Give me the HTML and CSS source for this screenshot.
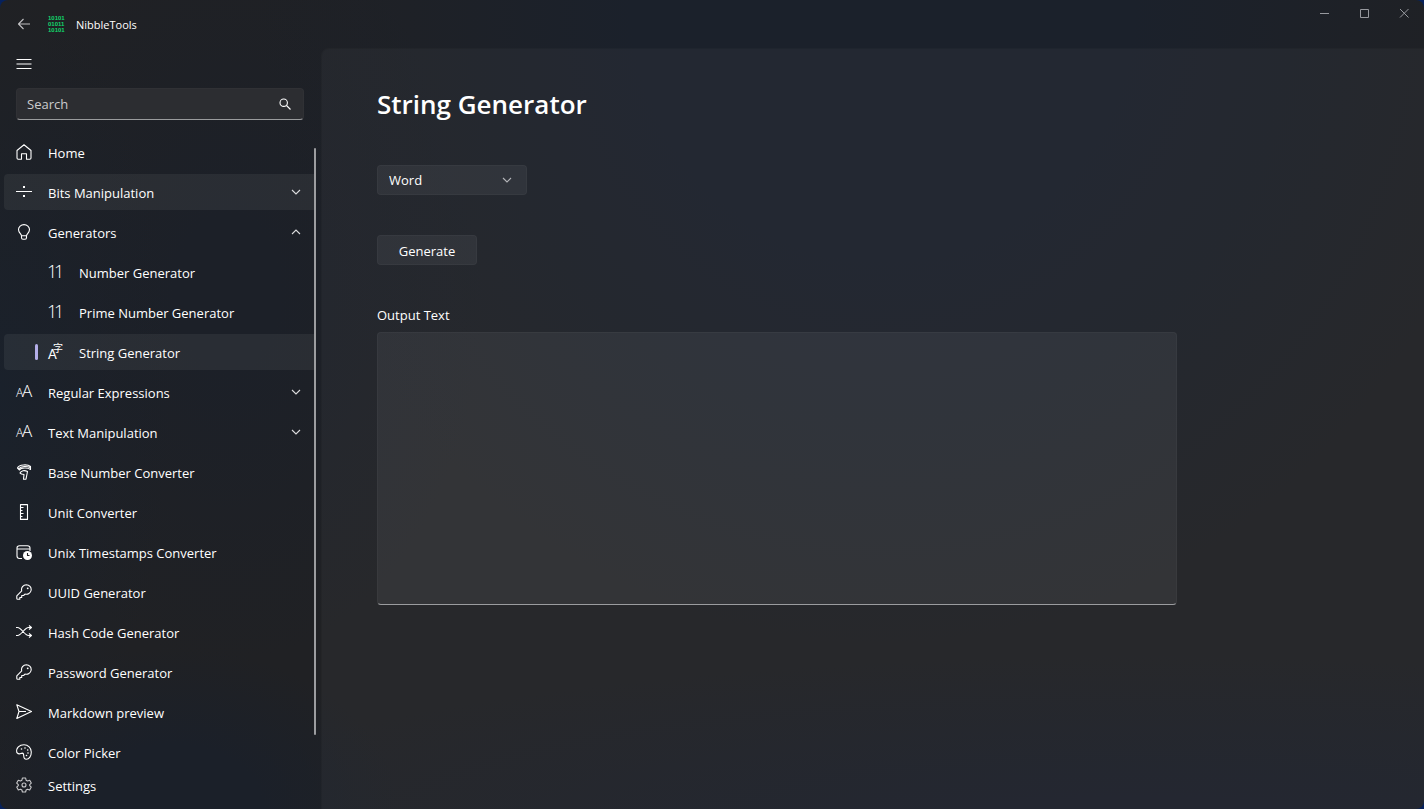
FILE: index.html
```html
<!DOCTYPE html>
<html lang="en">
<head>
<meta charset="utf-8">
<title>NibbleTools</title>
<link rel="stylesheet" href="styles.css">
</head>
<body>
<svg class="defs" aria-hidden="true">
  <symbol id="down" viewBox="0 0 10 10"><path d="M1 3l4 4 4-4"/></symbol>
  <symbol id="key" viewBox="0 0 16 16"><path d="M10.4.7a4.9 4.9 0 0 0-4.7 6.2L.8 11.800V14.500q0 .8.8.8H3.800V13.500H5.700V11.500H7.600L9 10.100A4.800 4.800 0 1 0 10.400.7z"/><circle class="solid" cx="11.700" cy="4.300" r=".9"/></symbol>
</svg>
<div class="window">
  <aside class="sidebar">
    <header class="brand">
      <button class="plain" type="button" aria-label="Back"><svg class="icon muted" viewBox="0 0 16 16"><path d="M14 8H2.500M7.500 3L2.500 8l5 5"/></svg></button>
      <svg class="icon logo" viewBox="0 0 16 16" aria-hidden="true"><text x="0" y="4">10101</text><text x="0" y="10">01011</text><text x="0" y="16">10101</text></svg>
      <span class="app-name">NibbleTools</span>
    </header>
    <button class="plain menu" type="button" aria-label="Menu"><svg class="icon" viewBox="0 0 16 16"><path d="M.5 3.500h15M.5 8h15M.5 12.500h15"/></svg></button>
    <form class="search">
      <input type="search" placeholder="Search" aria-label="Search">
      <button class="plain" type="button" aria-label="Find"><svg class="icon small" viewBox="0 0 12 12"><circle cx="4.700" cy="4.700" r="3.700"/><path d="M7.500 7.500l4 4"/></svg></button>
    </form>
    <nav class="nav">
      <div class="items">
        <a class="item" href="#"><svg class="icon" viewBox="0 0 16 16"><path d="M1 6.500L8 .8l7 5.700V14q0 1.200-1.200 1.200H10.500V9.800H5.500v5.400H2.200Q1 15.200 1 14z"/></svg><span>Home</span></a>
        <button class="item hover" type="button"><svg class="icon" viewBox="0 0 16 16"><path d="M0 7.500h16"/><path class="solid" d="M7 2h2v2H7zM7 11h2v2H7z"/></svg><span>Bits Manipulation</span><svg class="chevron"><use href="#down"/></svg></button>
        <button class="item" type="button"><svg class="icon" viewBox="0 0 16 16"><path d="M5.500 11.800C5.300 9.500 2.500 8.800 2.500 5.600a5.500 5 0 0 1 11 0c0 3.200-2.800 3.900-3 6.200zM5.500 11.800v2q0 1.500 1.500 1.500h2q1.500 0 1.500-1.500v-2"/></svg><span>Generators</span><svg class="chevron up"><use href="#down"/></svg></button>
        <a class="item child" href="#"><svg class="icon" viewBox="0 0 16 16"><text class="thin" x="-1 6" y="14" font-size="18">11</text></svg><span>Number Generator</span></a>
        <a class="item child" href="#"><svg class="icon" viewBox="0 0 16 16"><text class="thin" x="-1 6" y="14" font-size="18">11</text></svg><span>Prime Number Generator</span></a>
        <a class="item child selected" href="#" aria-current="page"><svg class="icon" viewBox="0 0 16 16"><text class="latin" x="0" y="15" font-size="13">A</text><text class="han" x="5" y="8" font-size="10">字</text></svg><span>String Generator</span></a>
        <button class="item" type="button"><svg class="icon" viewBox="0 0 16 16"><text class="thin" x="0" y="13" font-size="12">A</text><text class="thin" x="6" y="13" font-size="17">A</text></svg><span>Regular Expressions</span><svg class="chevron"><use href="#down"/></svg></button>
        <button class="item" type="button"><svg class="icon" viewBox="0 0 16 16"><text class="thin" x="0" y="13" font-size="12">A</text><text class="thin" x="6" y="13" font-size="17">A</text></svg><span>Text Manipulation</span><svg class="chevron"><use href="#down"/></svg></button>
        <a class="item" href="#"><svg class="icon" viewBox="0 0 16 16"><path d="M1.500 4C3 .2 12 .2 14.500 2.500v3C12 3.500 5 3.500 3.500 6zM2.500 5C5 1.600 11.500 2.200 14 3.500M4 9C5 6.500 8.500 6 11.500 7.500L10 15.200H7.500L8 10.500 5.500 10z"/></svg><span>Base Number Converter</span></a>
        <a class="item" href="#"><svg class="icon" viewBox="0 0 16 16"><path d="M4.500.6h7v14.800h-7zM4.500 3.500h3M4.500 6.500h2M4.500 9.500h3M4.500 12.500h2"/></svg><span>Unit Converter</span></a>
        <a class="item" href="#"><svg class="icon" viewBox="0 0 16 16"><path d="M6 14.500H3.500Q1 14.500 1 12V4Q1 1.700 3.500 1.700h8Q14 1.700 14 4v3M1 5h13"/><circle class="solid" cx="11.500" cy="11.500" r="4.500"/><path class="cut" d="M11.500 9V11.500h2"/></svg><span>Unix Timestamps Converter</span></a>
        <a class="item" href="#"><svg class="icon"><use href="#key"/></svg><span>UUID Generator</span></a>
        <a class="item" href="#"><svg class="icon" viewBox="0 0 16 16"><path d="M0 3.500h1.500c4 0 7 8 11 8H15M0 11.500h1.500c4 0 7-8 11-8H15M13 1.500l2.500 2L13 5.500M13 9.500l2.500 2L13 13.500"/></svg><span>Hash Code Generator</span></a>
        <a class="item" href="#"><svg class="icon"><use href="#key"/></svg><span>Password Generator</span></a>
        <a class="item" href="#"><svg class="icon" viewBox="0 0 16 16"><path d="M.8.8L15.500 7.500.8 14.500 3 7.500zM3 7.500h7"/></svg><span>Markdown preview</span></a>
        <a class="item" href="#"><svg class="icon" viewBox="0 0 16 16"><path d="M.8 8.500C-.2 4 3.500.7 8 .7A7.300 7.300 0 0 1 15.300 8c0 4-2 7.300-5 7.300-4.500 0-1-6-4-6.200-2 0-2.500 2.500-5.500-.6z"/><g class="solid"><circle cx="5.500" cy="5" r=".8"/><circle cx="9" cy="4" r=".8"/><circle cx="11.700" cy="6" r=".8"/><circle cx="12" cy="9" r=".8"/><circle cx="10.500" cy="11.500" r=".8"/></g></svg><span>Color Picker</span></a>
      </div>
      <div class="rail"><div class="thumb"></div></div>
    </nav>
    <a class="item settings" href="#"><svg class="icon" viewBox="0 0 16 16"><path d="M6.400 1h3.200l.5 2.200 1.400.8 2.200-.7 1.600 2.800L13.700 7.600v1l1.600 1.500-1.600 2.800-2.200-.7-1.400.8L9.600 15H6.400l-.5-2-1.400-.8-2.200.7L.7 10.100l1.600-1.500v-1L.7 6.100l1.600-2.800 2.200.7 1.400-.8z"/><circle cx="8" cy="8" r="2"/></svg><span>Settings</span></a>
  </aside>
  <div class="body">
    <header class="caption">
      <button class="plain" type="button" aria-label="Minimize"><svg class="glyph" viewBox="0 0 10 10"><path d="M1 5.500h9"/></svg></button>
      <button class="plain" type="button" aria-label="Maximize"><svg class="glyph" viewBox="0 0 10 10"><path d="M1.500 1.500h8v8h-8z"/></svg></button>
      <button class="plain" type="button" aria-label="Close"><svg class="glyph" viewBox="0 0 10 10"><path d="M1 1l8.500 8.500M9.500 1L1 9.500"/></svg></button>
    </header>
    <main class="page">
      <h1>String Generator</h1>
      <div class="picker">
        <select aria-label="Kind of text"><option>Word</option></select>
        <svg class="chevron"><use href="#down"/></svg>
      </div>
      <button class="generate" type="button">Generate</button>
      <div class="field">
        <label for="output">Output Text</label>
        <textarea id="output"></textarea>
      </div>
    </main>
  </div>
</div>
</body>
</html>
```
FILE: styles.css
```css
* { box-sizing: border-box; }

body {
  margin: 0;
  background: #06215c;
  color: #fff;
  font: 13px/20px "Open Sans", "Noto Sans", sans-serif;
}

button, input, select, textarea { font: inherit; color: inherit; }

.defs { position: absolute; width: 0; height: 0; }

.window {
  display: grid;
  grid-template-columns: 321px 1fr;
  height: 100vh;
  overflow: hidden;
  border-radius: 8px;
  background:
    radial-gradient(ellipse 44% 80% at 62% 0%, #1b212b 40%, transparent 100%),
    radial-gradient(ellipse 12% 50% at 0% 48%, #1a212b 0%, transparent 100%),
    radial-gradient(ellipse 18% 46% at 16% 36%, #1c2028 20%, transparent 100%),
    radial-gradient(ellipse 16% 20% at 12% 100%, #1b2029 40%, transparent 100%),
    radial-gradient(ellipse 70% 22% at 80% 103%, #1c202a 20%, transparent 100%),
    #202124;
}

.sidebar { display: flex; flex-direction: column; min-height: 0; }

.brand { display: flex; align-items: center; gap: 12px; height: 48px; padding: 0 16px; }
.brand .logo { margin-left: 4px; }
.app-name { padding-top: 1px; font-size: 11px; line-height: 16px; }

.plain {
  display: flex;
  align-items: center;
  justify-content: center;
  padding: 0;
  border: 0;
  background: none;
}

.menu { width: 48px; height: 32px; }

.icon {
  flex: none;
  width: 16px;
  height: 16px;
  overflow: visible;
  fill: none;
  stroke: #fff;
  stroke-width: 1.1;
  stroke-linejoin: round;
}
.icon.small { width: 12px; height: 12px; }
.muted { stroke: #c0c0c2; }
.solid { fill: #fff; stroke: none; }
.cut { stroke: #202124; }
.icon text { fill: #fff; stroke: none; }
.latin { font-family: Lato, sans-serif; }
.thin { font-family: "Open Sans", sans-serif; font-weight: 300; }
.han { font-family: "Noto Sans CJK SC", sans-serif; }
.icon.logo text {
  fill: #12d86c;
  font-family: "Liberation Sans", sans-serif;
  font-size: 6px;
  font-weight: 700;
}

.search {
  display: flex;
  flex: none;
  height: 32px;
  margin: 8px 17px 12px 16px;
  border: 1px solid #303135;
  border-bottom-color: #9a9b9d;
  border-radius: 4px;
  background: #2c2d31;
}
.search input {
  flex: 1;
  min-width: 0;
  padding: 0 10px;
  border: 0;
  outline: 0;
  background: none;
}
.search input::placeholder { color: #cbcbcd; opacity: 1; }
.search .plain { width: 36px; }

.nav { display: flex; flex: 1; min-height: 0; overflow: hidden; }
.items { flex: 1; min-width: 0; }
.rail { flex: none; width: 7px; padding: 16px 0 32px; }
.thumb { width: 2px; height: 100%; border-radius: 1px; background: #9c9da0; }

.item {
  position: relative;
  display: flex;
  align-items: center;
  gap: 16px;
  width: calc(100% - 4px);
  height: 36px;
  margin: 2px 0 4px 4px;
  padding: 0 13px 0 12px;
  border: 0;
  border-radius: 4px 0 0 4px;
  background: none;
  color: #fff;
  text-align: left;
  text-decoration: none;
}
.item span { flex: 1; padding-top: 2px; white-space: nowrap; }
.child { gap: 15px; padding-left: 44px; }
.hover, .selected { background: rgba(255, 255, 255, 0.06); }
.selected::before {
  content: "";
  position: absolute;
  left: 31px;
  top: 10px;
  width: 3px;
  height: 16px;
  border-radius: 2px;
  background: #b4aee8;
}
.settings { flex: none; width: auto; margin: 0 7px 6px 4px; }
.settings .icon { stroke: #c8c8ca; }

.chevron { flex: none; width: 10px; height: 10px; fill: none; stroke: #dcdcde; stroke-width: 1.1; }
.up { transform: rotate(180deg); }

.body { display: flex; flex-direction: column; min-width: 0; }
.caption { display: flex; flex: none; justify-content: flex-end; height: 48px; }
.caption .plain { width: 40px; height: 26px; }
.glyph { width: 10px; height: 10px; fill: none; stroke: #97999e; stroke-width: 1; }

.page {
  flex: 1;
  min-height: 0;
  padding: 36px 55px;
  border: 1px solid rgba(0, 0, 0, 0.08);
  border-width: 1px 0 0 1px;
  border-radius: 8px 0 0 0;
  background: rgba(255, 255, 255, 0.035);
}
h1 { margin: 0 0 42px; font-size: 26px; line-height: 38px; font-weight: 600; }

.picker { position: relative; width: 150px; height: 30px; margin-bottom: 40px; }
.picker select, .generate {
  height: 30px;
  border: 1px solid rgba(255, 255, 255, 0.03);
  border-radius: 4px;
  background: rgba(255, 255, 255, 0.06);
}
.picker select { appearance: none; width: 100%; padding: 0 11px; }
.picker option { background: #2c2d31; }
.picker .chevron { position: absolute; right: 15px; top: 10px; stroke: #b4b5b9; pointer-events: none; }
.generate { display: block; width: 100px; margin-bottom: 40px; padding: 1px 0 0; }

.field { display: flex; flex-direction: column; gap: 7px; max-width: 800px; }
.field textarea {
  height: 273px;
  padding: 6px 10px;
  border: 1px solid rgba(255, 255, 255, 0.03);
  border-bottom-color: #9b9c9f;
  border-radius: 4px;
  outline: 0;
  resize: none;
  background: rgba(255, 255, 255, 0.06);
}
```
